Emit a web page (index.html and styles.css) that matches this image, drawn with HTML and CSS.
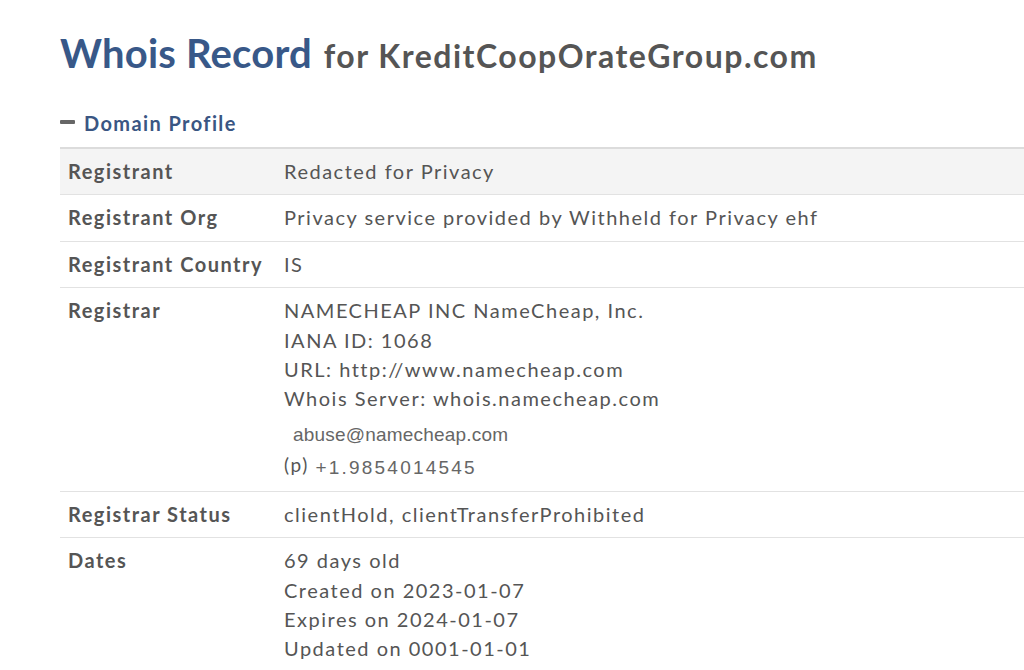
FILE: index.html
```html
<!DOCTYPE html>
<html lang="en">
<head>
    <meta charset="UTF-8">
    <meta name="viewport" content="width=device-width, initial-scale=1.0">
    <title>Whois Record</title>
    <link rel="stylesheet" href="styles.css">
</head>
<body>

<!-- Page Title -->
<h1 class="page-title">Whois Record <span class="domain">for KreditCoopOrateGroup.com</span></h1>

<!-- Domain Profile -->
<div class="section">
    <h2 class="section-title"><span class="toggle"></span>Domain Profile</h2>

    <table class="profile">
        <tr>
            <th>Registrant</th>
            <td>Redacted for Privacy</td>
        </tr>
        <tr>
            <th>Registrant Org</th>
            <td>Privacy service provided by Withheld for Privacy ehf</td>
        </tr>
        <tr>
            <th>Registrant Country</th>
            <td>IS</td>
        </tr>
        <tr>
            <th>Registrar</th>
            <td>
                NAMECHEAP INC NameCheap, Inc.<br>
                IANA ID: 1068<br>
                URL: http://www.namecheap.com<br>
                Whois Server: whois.namecheap.com
                <div class="contact-line email">abuse@namecheap.com</div>
                <div class="contact-line"><span class="phone-label">(p)</span> <span class="phone">+1.9854014545</span></div>
            </td>
        </tr>
        <tr>
            <th>Registrar Status</th>
            <td>clientHold, clientTransferProhibited</td>
        </tr>
        <tr>
            <th>Dates</th>
            <td>
                69 days old<br>
                Created on 2023-01-07<br>
                Expires on 2024-01-07<br>
                Updated on 0001-01-01
            </td>
        </tr>
    </table>
</div>

</body>
</html>
```

FILE: styles.css
```css
body {
    font-family: Lato, "Open Sans", sans-serif;
    background-color: #fff;
    color: #555;
    margin: 0;
    padding: 25px 0 0 60px;
    overflow: hidden;
}
.page-title {
    margin: 0;
    font-size: 40px;
    font-weight: bold;
    color: #385888;
    line-height: 56px;
    letter-spacing: 0.2px;
}
.page-title .domain {
    font-size: 32px;
    color: #555;
    letter-spacing: 1.5px;
    margin-left: 2px;
}
.section {
    margin-top: 27px;
}
.section-title {
    margin: 0 0 12px 0;
    font-size: 20px;
    font-weight: bold;
    color: #3a5683;
    letter-spacing: 1.4px;
    line-height: 24px;
    display: flex;
    align-items: center;
}
.toggle {
    display: inline-block;
    width: 15px;
    height: 4px;
    border-radius: 1px;
    background-color: #666;
    margin-right: 9px;
    margin-top: -3px;
}
.profile {
    width: 1000px;
    border-collapse: collapse;
    border-top: 2px solid #dcdcdc;
    font-size: 20px;
    letter-spacing: 1.5px;
    line-height: 29.4px;
}
.profile tr {
    border-bottom: 1px solid #e2e2e2;
}
.profile tr:first-child {
    background-color: #f4f4f4;
}
.profile th, .profile td {
    padding: 8px 8px 8px 8px;
    vertical-align: top;
    text-align: left;
}
.profile th {
    width: 200px;
    font-weight: bold;
    color: #555;
}
.profile td {
    color: #555;
}
.contact-line {
    line-height: 30px;
}
.email {
    margin-top: 6px;
    padding-left: 9px;
    font-family: "Liberation Sans", Arial, sans-serif;
    font-size: 19px;
    letter-spacing: 0.2px;
    color: #666;
}
.phone-label {
    font-size: 19px;
    letter-spacing: 1.6px;
    vertical-align: 2px;
}
.phone {
    font-family: "Liberation Sans", Arial, sans-serif;
    font-size: 19px;
    letter-spacing: 2.2px;
    color: #666;
}
```
